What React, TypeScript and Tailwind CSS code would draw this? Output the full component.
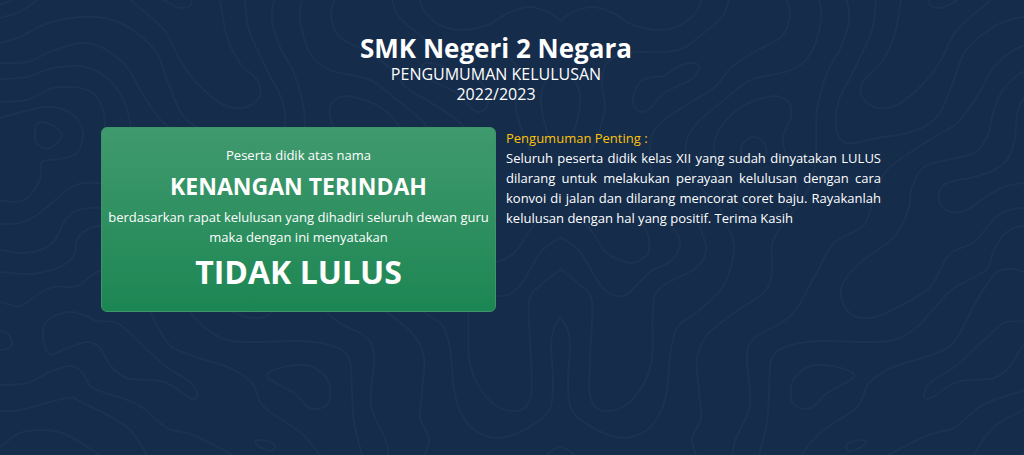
type Point = [number, number];

// Contour lines of the backdrop, each a list of "x,y" points on the right side of the mirror axis.
const AXIS = 560.5;

const openLines: string[] = [
  "560,21 573,12 593,7 613,13 633,25 660,30 681,25 696,12 701,0",
  "590,152 600,128 605,107 602,85 606,64 620,54 640,52 664,52 684,48 701,35 722,17 729,0",
  "787,0 790,17 781,37 754,52 731,68 714,88 691,102 664,120 653,133 650,150 652,175",
  "819,0 821,20 811,53 791,70 751,80 724,100 697,123 686,143 688,165 700,187 718,205 727,225 734,248 724,285 697,312 679,325 671,348 667,390 660,413 647,430 623,438 597,430 573,412 568,385 570,345 567,328 560,317",
  "847,0 849,20 841,47 827,73 817,110 816,150 812,180 799,205 782,225 772,245 772,272 764,292 731,315 707,335 697,358 699,392 701,418 692,438 696,455",
  "876,0 872,30 854,70 839,100 836,127 846,143 877,138 911,132 937,117 954,80 964,53 984,33 1003,22 1024,17 1051,18 1078,25 1101,37 1121,43",
  "901,0 894,37 881,63 864,80 861,95 874,107 897,105 924,83 941,60 957,30 991,0",
  "929,0 931,6 941,8 950,4 958,0",
  "1121,63 1094,62 1071,52 1041,43 1018,48 994,67 981,90 968,110 955,125 941,133 914,150 887,170 874,197 864,225 834,243 817,272 797,308 781,323 754,338 747,358 750,405 736,438 732,455",
  "1121,79 1094,77 1071,69 1041,66 1018,75 1001,93 993,113 987,137 974,153 947,160 924,167 912,187 909,207 902,225 891,240 861,262 842,285 844,305 857,317 881,315 927,290 941,268 951,253 974,242 989,225 1000,214 1021,208 1042,210 1054,218 1060,228 1066,240 1078,249 1098,253 1121,250",
  "1121,102 1094,100 1071,89 1048,87 1028,93 1018,110 1016,127 1014,143 1007,160 994,170 974,177 947,183 939,193 941,205 951,212 967,210 984,198 1004,187 1024,183 1038,183 1054,190 1081,213 1101,223 1121,224",
  "1121,118 1091,110 1068,107 1048,115 1038,133 1044,153 1061,159 1079,162 1081,180 1094,198 1108,202 1121,200",
  "1121,272 1091,274 1064,268 1048,257 1043,238 1028,227 1014,228 1001,238 992,255 986,270 954,288 937,305 917,327 894,340 864,342 824,341 791,345 772,358 769,392 767,422 759,455",
  "1121,302 1101,306 1084,295 1068,287 1044,286 1024,272 1007,269 994,275 977,300 954,342 931,355 891,368 869,383 857,407 821,432 801,455",
  "1121,331 1113,334 1109,342 1112,348 1121,350",
  "1121,385 1094,383 1071,372 1051,366 1039,372 1028,388 994,400 978,408 954,428 928,435 888,455",
  "1121,411 1101,410 1054,398 1038,403 994,427 974,455",
  "1121,447 1101,433 1078,430 1054,435 1021,455",
  "560,237 580,252 603,288 623,296 640,282 650,272 672,260 680,245 678,235 670,225 655,205",
  "699,225 706,248 697,267 660,288 653,308 652,358 643,385 623,407 600,410 590,395 590,358 592,302 580,285 560,269",
  "580,218 593,233 607,253 630,263 647,255 649,240 643,225 630,210",
  "560,446 568,450 575,455",
  "560,68 572,76 580,95 578,117 571,140",
  "1121,18 1102,12 1084,0",
  "1121,5 1108,0",
];

const closedLines: string[] = [
  "664,76 677,67 694,63 699,68 690,80 664,93 650,108 643,112 635,108 633,98 640,82 653,77",
  "714,150 719,130 741,107 774,96 789,103 791,117 783,137 786,155 797,180 790,205 765,218 735,200 718,175",
  "741,150 744,142 754,137 764,143 766,155 755,164 744,160",
  "1024,321 1004,323 984,340 957,365 931,382 924,395 931,398 957,382 994,378 1011,365 1021,348 1034,342 1054,348 1071,354 1078,338 1074,321 1054,312 1037,315",
  "791,388 797,375 814,365 841,368 854,377 827,393 811,408 794,405",
  "846,447 851,442 864,440 864,445 851,451",
  "1086,133 1083,123 1071,124 1059,135 1071,148 1084,144",
];

function smoothPath(source: string, closed: boolean): string {
  const pts = source.split(" ").map((p) => p.split(",").map(Number) as Point);
  const n = pts.length;
  const at = (i: number): Point =>
    closed ? pts[(i + n) % n] : pts[Math.max(0, Math.min(n - 1, i))];
  let d = `M${pts[0][0]} ${pts[0][1]}`;
  const segments = closed ? n : n - 1;
  for (let i = 0; i < segments; i++) {
    const [a, b, c, e] = [at(i - 1), at(i), at(i + 1), at(i + 2)];
    d += `C${b[0] + (c[0] - a[0]) / 6} ${b[1] + (c[1] - a[1]) / 6} ${c[0] - (e[0] - b[0]) / 6} ${c[1] - (e[1] - b[1]) / 6} ${c[0]} ${c[1]}`;
  }
  return closed ? d + "Z" : d;
}

const contours = [
  ...openLines.map((l) => smoothPath(l, false)),
  ...closedLines.map((l) => smoothPath(l, true)),
];

function Backdrop() {
  const half = contours.map((d) => <path key={d} d={d} />);
  return (
    <svg
      aria-hidden="true"
      className="absolute top-0 left-0 h-[455px] w-[1121px] max-w-none"
      viewBox="0 0 1121 455"
      fill="none"
      stroke="#1b3350"
      strokeWidth="2"
    >
      <g>{half}</g>
      <g transform={`translate(${AXIS * 2} 0) scale(-1 1)`}>{half}</g>
    </svg>
  );
}

function Result() {
  return (
    <section className="rounded-md border border-[#3d9569] bg-linear-to-b from-[#3f9a6e] to-[#1b8653] px-1 pt-[17px] pb-3.5 text-center">
      <p>Peserta didik atas nama</p>
      <h2 className="my-1 text-[23px] leading-[34px] font-bold">KENANGAN TERINDAH</h2>
      <p>
        berdasarkan rapat kelulusan yang dihadiri seluruh dewan guru maka dengan ini menyatakan
      </p>
      <p className="text-[32px] leading-[50px] font-bold">TIDAK LULUS</p>
    </section>
  );
}

function Notice() {
  return (
    <section className="border-t border-transparent px-2.5">
      <h2 className="text-[#ffc107]">Pengumuman Penting :</h2>
      <p className="text-justify">
        Seluruh peserta didik kelas XII yang sudah dinyatakan LULUS dilarang untuk melakukan
        perayaan kelulusan dengan cara konvoi di jalan dan dilarang mencorat coret baju.
        Rayakanlah kelulusan dengan hal yang positif. Terima Kasih
      </p>
    </section>
  );
}

export default function App() {
  return (
    <div className="relative min-h-screen overflow-hidden bg-[#152c4b] pr-8 font-['Open_Sans',sans-serif] text-[13px] leading-5 text-white">
      <Backdrop />
      <main className="relative mx-auto max-w-[790px] pt-8">
        <header className="text-center text-base leading-5">
          <h1 className="text-[26px] leading-8 font-bold">SMK Negeri 2 Negara</h1>
          <p>PENGUMUMAN KELULUSAN</p>
          <p>2022/2023</p>
        </header>
        <div className="mt-[23px] grid grid-cols-2 items-start">
          <Result />
          <Notice />
        </div>
      </main>
    </div>
  );
}
